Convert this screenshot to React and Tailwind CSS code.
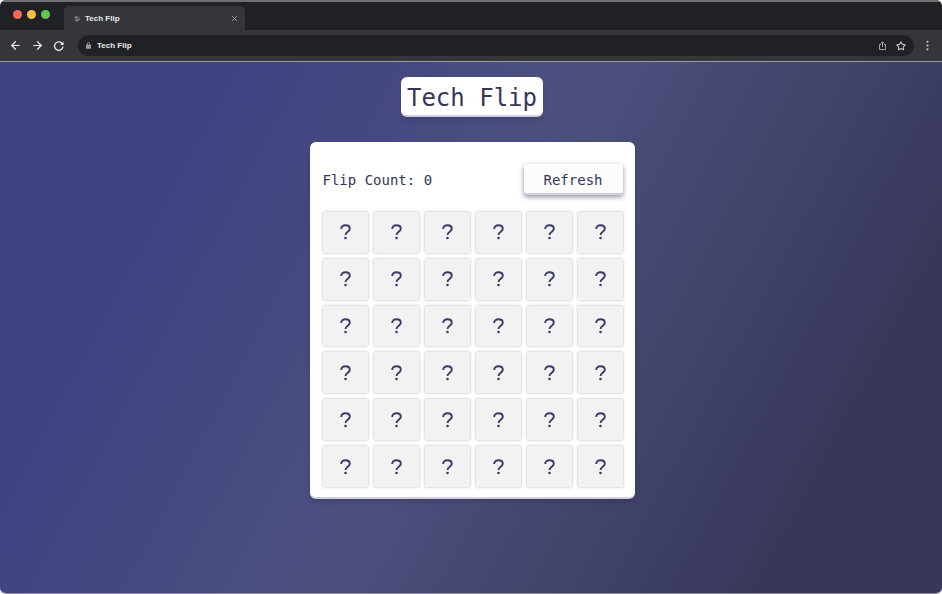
import { useState } from "react";
import { ArrowLeft, ArrowRight, X, Star, MoreVertical } from "lucide-react";

const TILES = Array.from({ length: 36 }, (_, i) => i);

function BrowserBar() {
  return (
    <header className="bg-[#202124] font-['Liberation_Sans',Arial,sans-serif] text-[#e8eaed]">
      <div className="flex h-[30px] items-end border-t-2 border-[#6d7172]">
        <div className="flex w-16 gap-[5px] self-center pb-[3px] pl-[13px]">
          <span className="size-[9px] rounded-full bg-[#ed6a5e]" />
          <span className="size-[9px] rounded-full bg-[#f5bf4f]" />
          <span className="size-[9px] rounded-full bg-[#62c554]" />
        </div>
        <div className="flex h-6 w-[181px] items-center rounded-t-[5px] bg-[#35363a] pt-px pr-[6px] pl-[10px]">
          <svg viewBox="0 0 12 12" className="size-[6px]" fill="none" stroke="#a5a7b0" strokeWidth="1.6">
            <path d="M1 3c3-2 8-2 10 2 0 4-5 6-9 4M2 6h4l2 3M3 1l3 4" />
          </svg>
          <span className="ml-[5px] flex-1 text-[8px] font-bold">Tech Flip</span>
          <button aria-label="Close tab"><X className="size-[9px] text-[#b5b6b9]" /></button>
        </div>
      </div>
      <div className="flex h-8 items-center border-b border-[#a09ba2] bg-[#35363a] pr-2 pl-[9px]">
        <nav className="flex gap-[9px]">
          <button aria-label="Back"><ArrowLeft className="size-[13px]" strokeWidth={2.2} /></button>
          <button aria-label="Forward"><ArrowRight className="size-[13px]" strokeWidth={2.2} /></button>
          <button aria-label="Reload">
            <svg viewBox="0 0 24 24" className="size-3" fill="none" stroke="currentColor" strokeWidth="2.6">
              <path d="M20 13a8.500 8.500 0 1 1-2.500-7L20 8.500" />
              <path d="M21 3v7h-7z" fill="currentColor" stroke="none" />
            </svg>
          </button>
        </nav>
        <div className="ml-[13px] flex h-[21px] flex-1 items-center rounded-full bg-[#202124] px-2">
          <svg viewBox="0 0 6 8" className="h-[7px] w-[5px]" fill="#9b9ba8">
            <path d="M0 3h1V2a2 2 0 0 1 4 0v1h1v5H0zM2 3h2V2a1 1 0 0 0-2 0z" />
          </svg>
          <input aria-label="Address" readOnly defaultValue="Tech Flip" className="ml-[6px] min-w-0 flex-1 bg-transparent text-[8px] font-bold outline-none" />
          <button aria-label="Share">
            <svg viewBox="0 0 18 18" className="size-[9px]" fill="none" stroke="#b0b1b4" strokeWidth="1.8">
              <path d="M6 7H3v10h12V7h-3M9 12V2M5.500 5 9 1.500 12.500 5" />
            </svg>
          </button>
          <button aria-label="Bookmark" className="ml-[9px]"><Star className="size-[10px] text-[#c5c6c9]" strokeWidth={2.5} /></button>
        </div>
        <button aria-label="Menu" className="ml-[7px]"><MoreVertical className="size-[13px] text-[#c5c6c9]" strokeWidth={2} /></button>
      </div>
    </header>
  );
}

function QuestionMark() {
  return (
    <svg viewBox="0 0 11 16" className="h-4 w-[11px]" fill="none" stroke="#3b3c66" strokeWidth="1.900">
      <path d="M1.200 5C1.200 2.600 3 1.200 5.500 1.200S9.800 2.700 9.800 4.700C9.800 7.600 5.500 7.800 5.500 11" />
      <circle cx="5.500" cy="14" r="1.300" fill="#3b3c66" stroke="none" />
    </svg>
  );
}

export default function App() {
  const [flips, setFlips] = useState(0);
  return (
    <div className="flex min-h-screen flex-col overflow-hidden rounded-md border-b border-[#8b8b98]">
      <BrowserBar />
      <main className="flex flex-1 flex-col items-center bg-[linear-gradient(118deg,#3e4182_16%,#4d507e_49%,#373859_85%)] pt-[15px] pr-4 pb-8 pl-[18px] font-['DejaVu_Sans_Mono',monospace] text-[#35365a]">
        <h1 className="rounded-md border-b-2 border-[#d0d0e4] bg-white px-[6px] pt-[5px] pb-px text-2xl shadow-md">Tech Flip</h1>
        <section className="mt-[25px] w-full max-w-[325px] rounded-md border-b-2 border-[#d0d0e4] bg-white pt-[22px] pr-3 pb-[10px] pl-[13px] shadow-md">
          <div className="flex items-center justify-between">
            <p className="text-sm">Flip Count: {flips}</p>
            <button onClick={() => setFlips(0)} className="h-[31px] w-[99px] rounded-[3px] border-b-2 border-[#d0d0e4] bg-[#fcfcfc] pt-[2px] text-sm shadow-[0_2px_5px_rgba(45,35,66,0.5)]">Refresh</button>
          </div>
          <div className="mt-[17px] grid h-[275px] grid-cols-6 grid-rows-6 gap-[6px]">
            {TILES.map((i) => (
              <button key={i} aria-label="Hidden card" onClick={() => setFlips(flips + 1)} className="flex items-center justify-center rounded-[1px] bg-[#f2f2f2] shadow-[0_0_3px_rgba(0,0,0,0.3)]">
                <QuestionMark />
              </button>
            ))}
          </div>
        </section>
      </main>
    </div>
  );
}
